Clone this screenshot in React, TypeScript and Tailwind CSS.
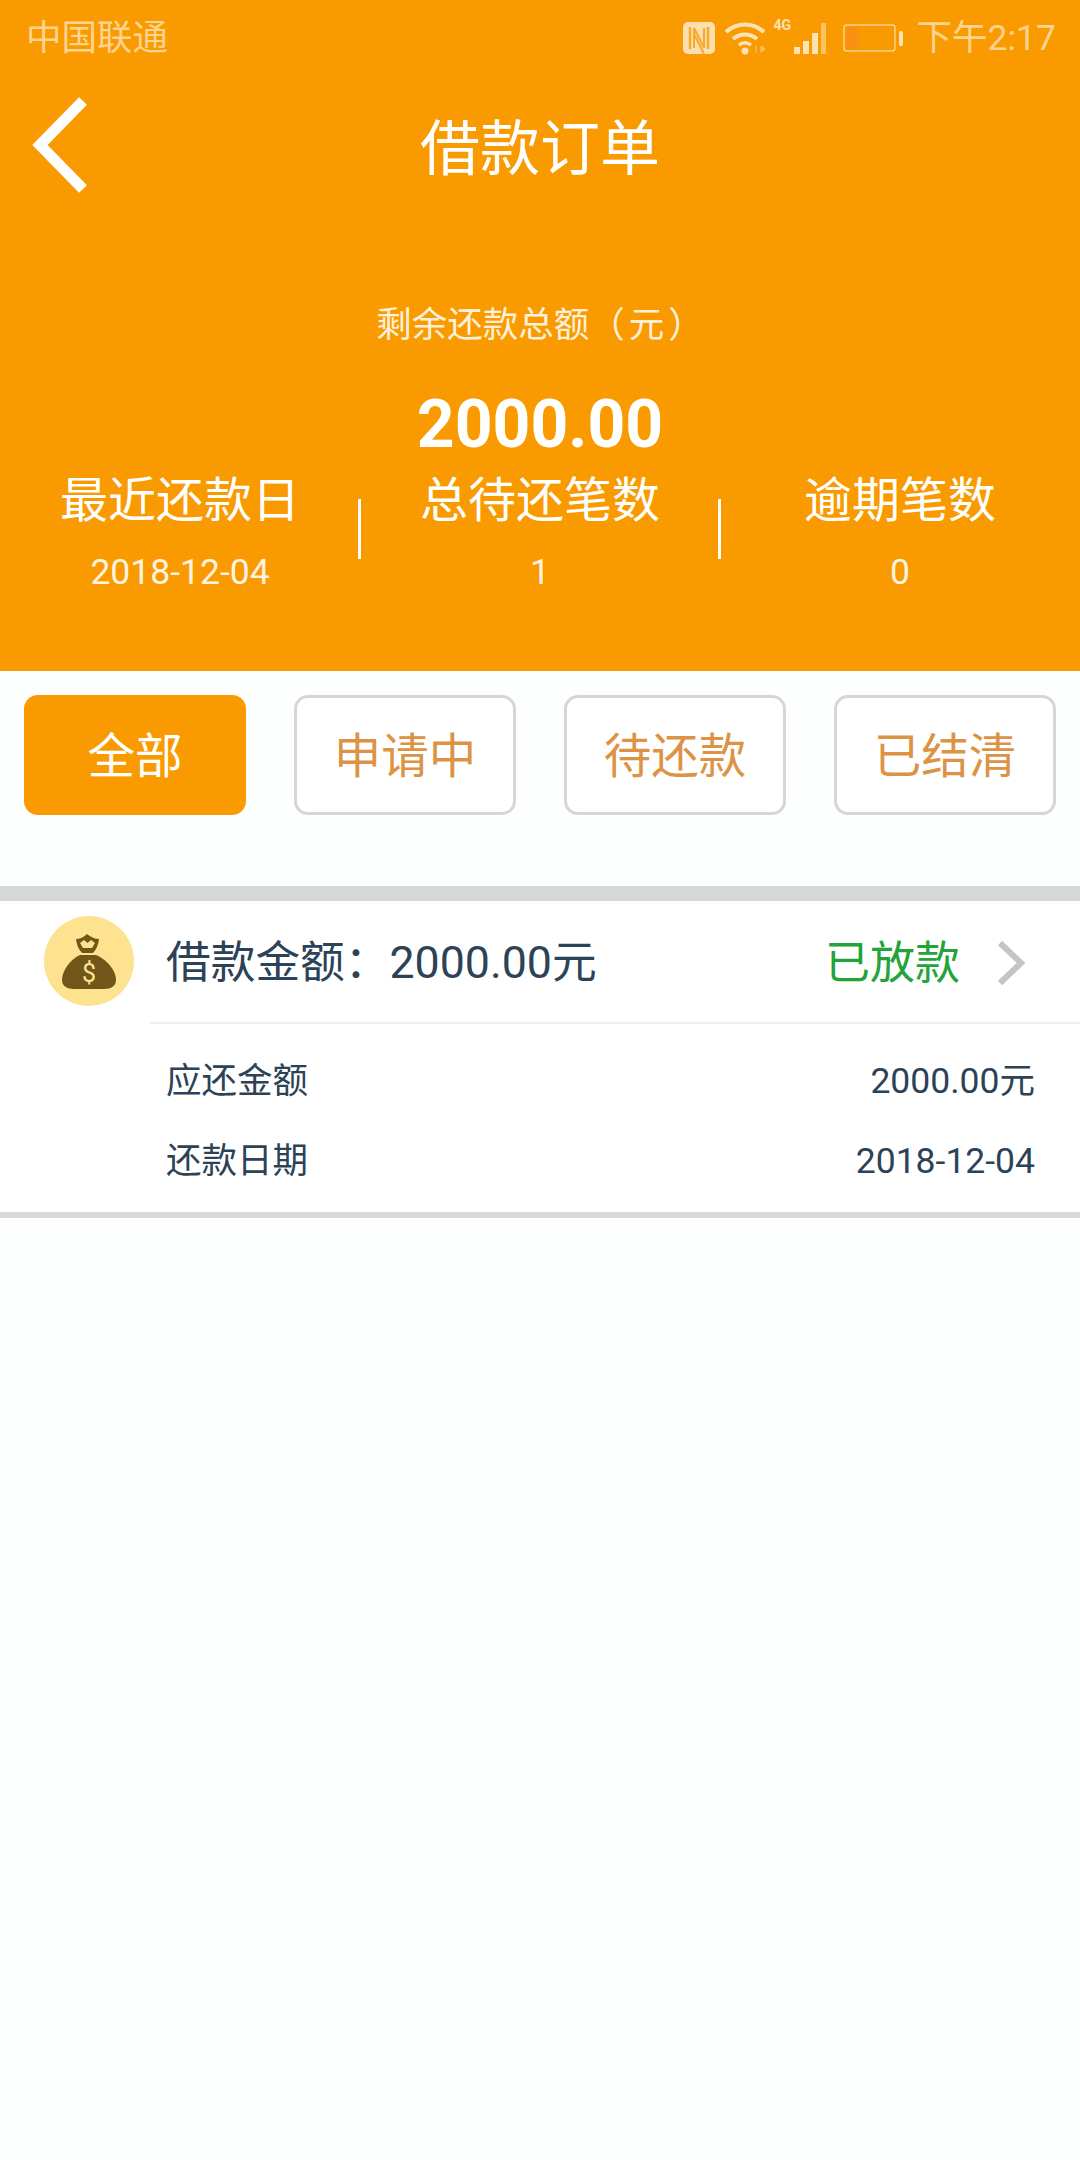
const FONT = "font-['Roboto','Noto_Sans_CJK_SC',sans-serif]";

function Nfc() {
  return (
    <svg width="34" height="34" viewBox="0 0 34 34" className="block">
      <rect x="1" y="1" width="32" height="32" rx="5" fill="#fddfae" />
      <path d="M8 6v22M26 6v22" stroke="#f7a92c" strokeWidth="2.5" fill="none" />
      <path d="M12 7l10 20M12 13l10 20M12 7v20M22 7v20" stroke="#f7a92c" strokeWidth="2" fill="none" />
    </svg>
  );
}

function Wifi() {
  return (
    <svg width="44" height="34" viewBox="0 0 44 34" className="block">
      <path d="M1 11C12 1 28 1 39 11" stroke="#fde2b4" strokeWidth="4" fill="none" />
      <path d="M8 18c7-6 17-6 24 0" stroke="#fde2b4" strokeWidth="4" fill="none" />
      <path d="M14 24c4-3 8-3 12 0" stroke="#fde2b4" strokeWidth="3.5" fill="none" />
      <circle cx="20" cy="30" r="3.5" fill="#fde2b4" />
      <path d="M31 24v8M36 25l4 3-4 3z" stroke="#fde2b4" strokeWidth="1" fill="#fde2b4" opacity="0.6" />
    </svg>
  );
}

function Signal() {
  return (
    <svg width="36" height="34" viewBox="0 0 36 34" className="block">
      <rect x="1" y="26" width="6" height="7" fill="#fde2b4" />
      <rect x="10" y="20" width="6" height="13" fill="#fde2b4" />
      <rect x="19" y="12" width="6" height="21" fill="#fde2b4" />
      <rect x="28" y="2" width="5" height="31" fill="#fde2b4" opacity="0.55" />
    </svg>
  );
}

function Battery() {
  return (
    <svg width="62" height="30" viewBox="0 0 62 30" className="block">
      <rect x="1" y="2" width="51" height="26" rx="3" fill="none" stroke="#fcd28c" strokeWidth="1.5" />
      <rect x="3" y="4" width="13" height="22" fill="#fa9114" />
      <rect x="56" y="8" width="4" height="15" rx="1.5" fill="#fde2b4" />
    </svg>
  );
}

function MoneyBag() {
  return (
    <svg width="90" height="90" viewBox="0 0 90 90" className="block">
      <circle cx="45" cy="45" r="45" fill="#fde28f" />
      <path d="M32 23Q38 23 43 18Q49 23 55 23Q54 32 49 37H38Q33 32 32 23z" fill="#71561a" />
      <path d="M36 27l4-3 3.500 3 3.500-3 4 3-3 5h-9z" fill="#fde28f" />
      <path d="M36 39h16c10 4 20 15 20 25 0 6-5 9-12 9H30c-7 0-12-3-12-9 0-10 9-21 18-25z" fill="#71561a" />
      <text x="45" y="66" textAnchor="middle" fontSize="25" fontFamily="Roboto, sans-serif" fill="#fde28f">$</text>
    </svg>
  );
}

function Stat({ label, value, border }: { label: string; value: string; border?: boolean }) {
  return (
    <div className="relative flex-1 flex flex-col items-center">
      <div className="text-[48px] leading-[60px] text-white">{label}</div>
      <div className="text-[35.500px] leading-[40px] mt-[21px] text-[#fdf3e0]">{value}</div>
      {border && <div className="absolute -right-px top-[28px] w-[3px] h-[60px] bg-white" />}
    </div>
  );
}

function Tab({ label, active }: { label: string; active?: boolean }) {
  return active ? (
    <div className="w-[222px] h-[120px] rounded-[14px] bg-[#f99b00] text-white text-[47.500px] pt-[5px] flex items-center justify-center">
      {label}
    </div>
  ) : (
    <div className="w-[222px] h-[120px] rounded-[14px] border-[3px] border-[#d6d6d6] bg-white text-[#dd9345] text-[47.500px] pt-[5px] flex items-center justify-center">
      {label}
    </div>
  );
}

export default function App() {
  return (
    <div className={`${FONT} w-[1080px] h-[2160px] bg-[#fdfefe] overflow-hidden`}>
      <div className="h-[671px] bg-[#f99b00]">
        <div className="h-[74px] pl-[26px] pr-[24px] pt-[2px] flex items-center justify-between">
          <span className="text-[35.500px] leading-[40px] text-[#fdd48f]">中国联通</span>
          <div className="flex items-center">
            <Nfc />
            <div className="ml-[9px]"><Wifi /></div>
            <div className="relative ml-[5px] pl-[19px]">
              <span className="absolute left-0 -top-[3px] text-[14px] font-bold leading-[14px] text-[#fde2b4]">4G</span>
              <Signal />
            </div>
            <div className="ml-[14px]"><Battery /></div>
            <span className="ml-[12px] text-[35.500px] leading-[40px] text-[#fdd48f]">下午2:17</span>
          </div>
        </div>
        <div className="relative h-[150px] pt-[2px] flex items-center justify-center">
          <svg width="62" height="98" viewBox="0 0 62 98" className="absolute left-[29px] top-[22px]">
            <path d="M54 5L11 49l43 44" stroke="#ffffff" strokeWidth="11" fill="none" />
          </svg>
          <span className="text-[60px] leading-[70px] text-white">借款订单</span>
        </div>
        <div className="mt-[77px] text-center text-[35.500px] leading-[48px] text-[#fdf0da]">
          剩余还款总额（<span className="mx-[4px]">元</span>）
        </div>
        <div className="mt-[40px] text-center text-[66px] leading-[72px] font-bold text-white">2000.00</div>
        <div className="flex mt-[10px]">
          <Stat label="最近还款日" value="2018-12-04" border />
          <Stat label="总待还笔数" value="1" border />
          <Stat label="逾期笔数" value="0" />
        </div>
      </div>
      <div className="flex justify-between pl-[24px] pr-[24px] pt-[24px] h-[215px]">
        <Tab label="全部" active />
        <Tab label="申请中" />
        <Tab label="待还款" />
        <Tab label="已结清" />
      </div>
      <div className="h-[15px] bg-[#d5d8d8]" />
      <div className="bg-white">
        <div className="flex">
          <div className="w-[166px] pl-[44px] pt-[15px] shrink-0"><MoneyBag /></div>
          <div className="flex-1">
            <div className="h-[121px] pt-[5px] flex items-center justify-between">
              <span className="text-[44.700px] text-[#2c4257]">借款金额：2000.00元</span>
              <div className="flex items-center pr-[52px]">
                <span className="text-[45px] text-[#22a43a]">已放款</span>
                <svg width="32" height="46" viewBox="0 0 32 46" className="ml-[36px] -translate-y-px">
                  <path d="M4 3l21 20L4 43" stroke="#c4c4c4" strokeWidth="6" fill="none" />
                </svg>
              </div>
            </div>
          </div>
        </div>
        <div className="ml-[150px] h-[2px] bg-[#efefef]" />
        <div className="pl-[166px] pr-[45px] pt-[18px] text-[35.500px] text-[#2c4257]">
          <div className="flex justify-between items-center h-[80px]">
            <span>应还金额</span>
            <span>2000.00元</span>
          </div>
          <div className="flex justify-between items-center h-[80px]">
            <span>还款日期</span>
            <span>2018-12-04</span>
          </div>
        </div>
        <div className="h-[6px] mt-[10px] bg-[#d9d9d9]" />
      </div>
    </div>
  );
}
